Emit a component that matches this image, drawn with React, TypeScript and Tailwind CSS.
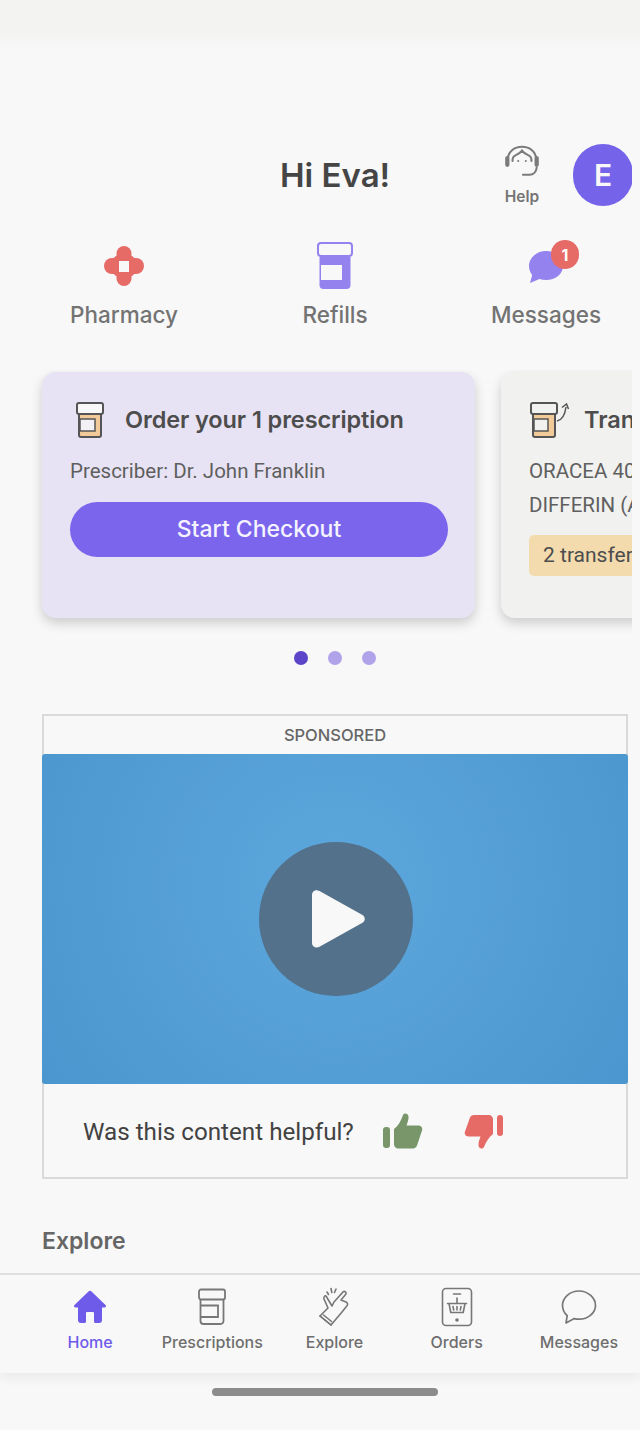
import { ReactNode } from "react";

const SANS = "font-['Inter','Lato',sans-serif]";
const BODY = "font-['Roboto','Liberation_Sans',sans-serif]";

function CrossIcon() {
  return (
    <svg width="40" height="40" viewBox="0 0 40 40">
      <rect x="12.500" y="0" width="15" height="40" rx="7.500" fill="#e66a66" />
      <rect x="0" y="12" width="40" height="16" rx="8" fill="#e66a66" />
      <rect x="10" y="10" width="20" height="20" rx="3" fill="#e66a66" />
      <rect x="15" y="15" width="10" height="11" fill="#f8f8f8" />
    </svg>
  );
}

function RefillIcon() {
  return (
    <svg width="38" height="48" viewBox="0 0 38 48">
      <rect x="2" y="1" width="34" height="13" rx="3" fill="#f8f8f8" stroke="#9482ee" strokeWidth="2" />
      <path d="M3.500 15h31v28a4 4 0 0 1-4 4h-23a4 4 0 0 1-4-4z" fill="#9482ee" />
      <rect x="5" y="23" width="21" height="15" fill="#f8f8f8" />
    </svg>
  );
}

function MessageBadgeIcon() {
  return (
    <div className="relative h-[50px] w-[52px]">
      <svg className="absolute left-[0px] top-[7px]" width="38" height="36" viewBox="0 0 38 36">
        <path
          d="M19 2C9.500 2 2 9 2 17c0 3.500 1.300 6.500 3.200 9L3 34l9.500-4c2 .6 4.300.9 6.500.9 9.500 0 17-6 17-14C36 9 28.500 2 19 2z"
          fill="#9482ee"
        />
      </svg>
      <span
        className={`absolute left-[24px] top-[-2px] flex h-[29px] w-[28px] items-center justify-center rounded-full bg-[#e66a66] text-[16px] font-bold leading-none text-white ${SANS}`}
      >
        1
      </span>
    </div>
  );
}

function BottleSmall() {
  return (
    <svg width="30" height="38" viewBox="0 0 30 38">
      <path d="M4 12h22v22a2 2 0 0 1-2 2H6a2 2 0 0 1-2-2z" fill="#f2c999" stroke="#555" strokeWidth="2" />
      <rect x="2" y="2" width="26" height="11" rx="2" fill="#f8f8f8" stroke="#555" strokeWidth="2" />
      <rect x="5" y="18" width="15" height="12" fill="#f3f1f5" stroke="#555" strokeWidth="1.500" />
    </svg>
  );
}

function TransferIcon() {
  return (
    <svg width="42" height="38" viewBox="0 0 42 38">
      <path d="M4 12h22v22a2 2 0 0 1-2 2H6a2 2 0 0 1-2-2z" fill="#f2c999" stroke="#555" strokeWidth="2" />
      <rect x="2" y="2" width="26" height="11" rx="2" fill="#f1f1f0" stroke="#555" strokeWidth="2" />
      <rect x="5" y="18" width="14" height="12" fill="#f1f1f0" stroke="#555" strokeWidth="1.500" />
      <path d="M28 20c5-1 8-6 9-14M33 6.500l4.500-3.500 2 5" fill="none" stroke="#555" strokeWidth="1.500" />
    </svg>
  );
}

function HelpIcon() {
  return (
    <svg width="36" height="34" viewBox="0 0 38 34" fill="none" stroke="#7b7b7b" strokeWidth="2.200" strokeLinecap="round">
      <path d="M4 16C4 7 11 2 19 2s15 5 15 14" />
      <path d="M9 17c0-4 1-5 4-6.500 2.500-1.200 4.500-2.500 6-4.500 1.500 2 3.500 3.300 6 4.500 3 1.500 4 2.500 4 6.500" />
      <path d="M3.500 14v7M34.500 14v7" strokeWidth="4.500" />
      <path d="M34.500 24c-.5 4.500-3.500 7.500-7.500 7.500h-7" />
      <circle cx="15" cy="17" r="1.100" fill="#7b7b7b" stroke="none" />
      <circle cx="23" cy="17" r="1.100" fill="#7b7b7b" stroke="none" />
    </svg>
  );
}

function HomeNavIcon() {
  return (
    <svg width="34" height="34" viewBox="0 0 34 34">
      <path
        d="M15.500 1.500a2 2 0 0 1 3 0l14 13.500c1 1 .4 2.500-1 2.500H29v12.500a3 3 0 0 1-3 3h-3.500a1.500 1.500 0 0 1-1.500-1.500V23a1 1 0 0 0-1-1h-6a1 1 0 0 0-1 1v8.500a1.500 1.500 0 0 1-1.500 1.500H8a3 3 0 0 1-3-3V17.500H2.500c-1.400 0-2-1.500-1-2.500z"
        fill="#6f5bea"
      />
    </svg>
  );
}

function PrescriptionNavIcon() {
  return (
    <svg width="30" height="38" viewBox="0 0 30 38" fill="none" stroke="#777" strokeWidth="1.800">
      <rect x="2" y="1.500" width="26" height="10" rx="2" />
      <path d="M3.500 11.500V33a3 3 0 0 0 3 3h17a3 3 0 0 0 3-3V11.500" />
      <path d="M3.500 17.500H21V29H3.500" />
    </svg>
  );
}

function ExploreNavIcon() {
  return (
    <svg width="34" height="40" viewBox="0 0 34 40" fill="none" stroke="#777" strokeWidth="1.600" strokeLinejoin="round" strokeLinecap="round">
      <path d="M8 9l6 10 2-4 9-10c1.500-1.500 4 .5 2.800 2.300L23 13l5 2c1.500.7 2 2 1.200 3.500L24 25 13 38 2 29l8-8-4-9c-.7-2 1.300-4 2-3z" />
      <path d="M2 29l11 9M5.500 28l8 6.500" />
      <path d="M9 5l1.500 2.500M13 1.500l.8 4M18 2l-1.500 3.500" />
    </svg>
  );
}

function OrdersNavIcon() {
  return (
    <svg width="32" height="40" viewBox="0 0 32 40" fill="none" stroke="#777" strokeWidth="1.600" strokeLinecap="round" strokeLinejoin="round">
      <rect x="1.500" y="1.500" width="29" height="37" rx="3.500" />
      <path d="M12.500 7h7" />
      <path d="M16 11v5" />
      <path d="M6.500 16.500h19M8 16.500l1.800 9h12.400l1.800-9M12 19.500l.7 3.500M16 19.500V23M20 19.500l-.7 3.500" />
      <circle cx="16" cy="33" r="1" fill="#777" />
    </svg>
  );
}

function MessagesNavIcon() {
  return (
    <svg width="36" height="36" viewBox="0 0 36 36" fill="none" stroke="#777" strokeWidth="1.700" strokeLinejoin="round">
      <path d="M18 2C8.800 2 1.500 8.600 1.500 16.500c0 4 1.800 7.500 4.700 10.200L5 34l8.300-4.400c1.500.4 3.100.6 4.700.6 9.200 0 16.500-6.300 16.500-13.700S27.200 2 18 2z" />
    </svg>
  );
}

function QuickLink({ icon, label }: { icon: ReactNode; label: string }) {
  return (
    <div className="flex w-[130px] flex-col items-center">
      <div className="flex h-[52px] items-center justify-center">{icon}</div>
      <span className={`mt-[8px] text-[22.500px] font-medium leading-[30px] text-[#737373] ${SANS}`}>{label}</span>
    </div>
  );
}

function NavItem({ icon, label, active }: { icon: ReactNode; label: string; active?: boolean }) {
  return (
    <div className="flex w-[122.400px] flex-col items-center">
      <div className="flex h-[42px] items-center justify-center">{icon}</div>
      <span
        className={`mt-[3px] text-[16px] font-medium leading-[22px] ${SANS} ${active ? "text-[#6f5bea]" : "text-[#6e6e6e]"}`}
      >
        {label}
      </span>
    </div>
  );
}

export default function App() {
  return (
    <div className="flex h-[1430px] w-[640px] flex-col overflow-hidden bg-[#f8f8f8]">
      <div className="h-[48px] shrink-0 bg-gradient-to-b from-[#f3f3f2] from-70% to-[#f8f8f8]" />

      {/* Greeting */}
      <header className="mt-[95px] flex h-[64px] w-[632px] shrink-0 items-center overflow-hidden pl-[280px]">
        <h1 className={`w-[150px] shrink-0 text-[33px] font-semibold leading-none text-[#454545] ${SANS}`}>Hi Eva!</h1>
        <div className="ml-[57px] flex w-[70px] shrink-0 flex-col items-center">
          <HelpIcon />
          <span className={`mt-[9px] text-[15.500px] font-semibold leading-[20px] text-[#757575] ${SANS}`}>Help</span>
        </div>
        <div className="ml-[16px] flex h-[62px] w-[60px] shrink-0 items-center justify-center rounded-full bg-[#7563ea]">
          <span className={`text-[30px] font-semibold leading-none text-[#f8f8f8] ${SANS}`}>E</span>
        </div>
      </header>

      {/* Quick links */}
      <nav className="mt-[33px] flex w-[632px] shrink-0 gap-[81px] pl-[59px]">
        <QuickLink icon={<CrossIcon />} label="Pharmacy" />
        <QuickLink icon={<RefillIcon />} label="Refills" />
        <QuickLink icon={<div className="ml-[14px] mt-[2px]"><MessageBadgeIcon /></div>} label="Messages" />
      </nav>

      {/* Carousel */}
      <section className="mt-[40px] flex h-[268px] w-[632px] shrink-0 gap-[26px] overflow-hidden pl-[42px] pt-[2px]">
        <div className="h-[246px] w-[433px] shrink-0 rounded-[14px] bg-[#e8e3f4] px-[28px] pt-[28px] shadow-[0_5px_12px_rgba(0,0,0,0.18)]">
          <div className="flex items-center gap-[20px] pl-[5px]">
            <BottleSmall />
            <h2 className={`text-[23.500px] font-semibold leading-[40px] tracking-[-0.1px] text-[#4d4d4d] ${SANS}`}>Order your 1 prescription</h2>
          </div>
          <p className={`mt-[16px] text-[20.500px] leading-[30px] text-[#5f5f5f] ${BODY}`}>Prescriber: Dr. John Franklin</p>
          <button className={`mt-[16px] h-[55px] w-[378px] rounded-full bg-[#7a65ec] text-[23px] font-medium text-[#f5f3ff] ${SANS}`}>
            Start Checkout
          </button>
        </div>
        <div className="h-[246px] w-[433px] shrink-0 rounded-[14px] bg-[#f1f1f0] px-[28px] pt-[28px] shadow-[0_5px_12px_rgba(0,0,0,0.18)]">
          <div className="flex items-center gap-[13px]">
            <TransferIcon />
            <h2 className={`text-[23.500px] font-semibold leading-[40px] text-[#4d4d4d] ${SANS}`}>Transfer</h2>
          </div>
          <p className={`mt-[16px] text-[20.500px] leading-[30px] text-[#5f5f5f] ${BODY}`}>ORACEA 40 MG</p>
          <p className={`mt-[4px] text-[20.500px] leading-[30px] text-[#5f5f5f] ${BODY}`}>DIFFERIN (ADAPALENE)</p>
          <span className={`mt-[15px] inline-block h-[41px] rounded-[5px] bg-[#f3dbae] px-[14px] text-[21px] leading-[41px] text-[#4d4d4d] ${BODY}`}>
            2 transfers in progress
          </span>
        </div>
      </section>

      {/* Dots */}
      <div className="mt-[13px] flex w-[670px] shrink-0 justify-center gap-[20px]">
        <span className="h-[14px] w-[14px] rounded-full bg-[#5c45c9]" />
        <span className="h-[14px] w-[14px] rounded-full bg-[#b1a3ea]" />
        <span className="h-[14px] w-[14px] rounded-full bg-[#b1a3ea]" />
      </div>

      {/* Sponsored */}
      <section className="ml-[42px] mt-[49px] h-[465px] w-[586px] shrink-0 border-2 border-[#dadada]">
        <div className={`h-[38px] text-center text-[16.500px] font-medium leading-[38px] text-[#666] ${SANS}`}>SPONSORED</div>
        <div className="mx-[-2px] flex h-[330px] items-center justify-center rounded-[3px] bg-[radial-gradient(circle_at_50%_40%,#5ca7dc_0%,#4c96cf_100%)]">
          <div className="ml-[1px] flex h-[154px] w-[154px] items-center justify-center rounded-full bg-[#53718a]">
            <svg width="58" height="62" viewBox="0 0 58 62" className="ml-[5px]">
              <path d="M3 7c0-4 4-6 7.500-4l43 24c3 1.800 3 6 0 7.800l-43 24C7 60.800 3 58.800 3 55z" fill="#f8f8f8" />
            </svg>
          </div>
        </div>
        <div className="flex h-[93px] items-start pl-[39px] pt-[28px]">
          <span className={`text-[24.200px] leading-[40px] text-[#424242] ${BODY}`}>Was this content helpful?</span>
          <svg width="40" height="36" viewBox="0 0 40 36" className="ml-[29px] mt-[1px]">
            <rect x="0" y="14" width="7" height="21" rx="3" fill="#78966a" />
            <path d="M11 16c4-3 7-8 9-14 .6-2 5-2.500 5.500 1.500.3 3-1 6-2 9h12c3 0 4.500 3 3.500 5l-5 15c-.6 1.600-2 3-4 3H15c-2 0-4-2-4-4z" fill="#78966a" />
          </svg>
          <svg width="40" height="36" viewBox="0 0 40 36" className="ml-[41px] mt-[2px]">
            <rect x="33" y="1" width="6" height="21" rx="3" fill="#e66a66" />
            <path d="M29 20c-4 3-7 8-9 13-.6 2-5 2.500-5.500-1.500-.3-3 1-6 2-9h-12c-3 0-4.500-3-3.500-5l5-14C6.600 2 8 1 10 1h15c2 0 4 2 4 4z" fill="#e66a66" />
          </svg>
        </div>
      </section>

      <h3 className={`ml-[42px] mt-[46px] shrink-0 text-[23px] font-semibold leading-[32px] text-[#666] ${SANS}`}>Explore</h3>

      {/* Bottom tabs */}
      <footer className="mt-[16px] flex h-[100px] shrink-0 border-t-2 border-[#dfdfdf] bg-[#f8f8f8] pl-[29px] pt-[11px] shadow-[0_6px_10px_rgba(0,0,0,0.05)]">
        <NavItem icon={<HomeNavIcon />} label="Home" active />
        <NavItem icon={<PrescriptionNavIcon />} label="Prescriptions" />
        <NavItem icon={<ExploreNavIcon />} label="Explore" />
        <NavItem icon={<OrdersNavIcon />} label="Orders" />
        <NavItem icon={<MessagesNavIcon />} label="Messages" />
      </footer>

      <div className="ml-[212px] mt-[15px] h-[8px] w-[226px] shrink-0 rounded-full bg-[#8c8c8c]" />
    </div>
  );
}
